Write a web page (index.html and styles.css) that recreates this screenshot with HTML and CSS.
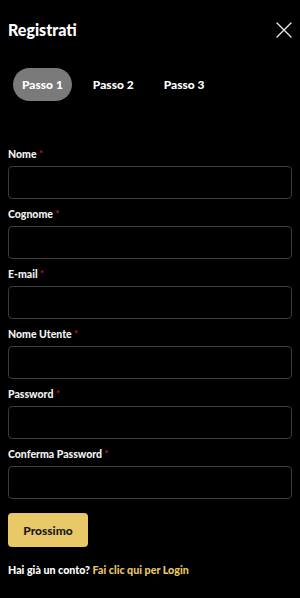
FILE: index.html
```html
<!DOCTYPE html>
<html lang="it">
<head>
<meta charset="utf-8">
<link rel="stylesheet" href="styles.css">
<title>Registrati</title>
</head>
<body>
<div class="panel">
  <header class="header">
    <h1 class="title">Registrati</h1>
    <button class="close" aria-label="Chiudi">
      <svg width="16" height="16" viewBox="0 0 16 16"><path d="M1 1 L15 15 M15 1 L1 15" stroke="#e6e6e6" stroke-width="1.4" fill="none" stroke-linecap="round"/></svg>
    </button>
  </header>
  <nav class="steps">
    <span class="step active">Passo 1</span>
    <span class="step">Passo 2</span>
    <span class="step">Passo 3</span>
  </nav>
  <form class="form">
    <div class="field"><label class="label">Nome <span class="req">*</span></label><input class="input" type="text"></div>
    <div class="field"><label class="label">Cognome <span class="req">*</span></label><input class="input" type="text"></div>
    <div class="field"><label class="label">E-mail <span class="req">*</span></label><input class="input" type="text"></div>
    <div class="field"><label class="label">Nome Utente <span class="req">*</span></label><input class="input" type="text"></div>
    <div class="field"><label class="label">Password <span class="req">*</span></label><input class="input" type="password"></div>
    <div class="field"><label class="label">Conferma Password <span class="req">*</span></label><input class="input" type="password"></div>
    <button class="next" type="button">Prossimo</button>
    <p class="login">Hai già un conto? <a class="link" href="#">Fai clic qui per Login</a></p>
  </form>
</div>
</body>
</html>
```
FILE: styles.css
```css
html, body {
  margin: 0;
  padding: 0;
  background: #000;
}
body {
  font-family: Lato, "Open Sans", sans-serif;
  color: #fff;
  width: 300px;
  height: 598px;
  overflow: hidden;
}
.panel {
  padding: 0 8px;
}
.header {
  height: 60px;
  display: flex;
  align-items: center;
  justify-content: space-between;
}
.title {
  margin: 0;
  font-size: 16px;
  line-height: 20px;
  font-weight: 900;
  color: #fff;
}
.close {
  background: none;
  border: 0;
  padding: 0;
  width: 16px;
  height: 16px;
  display: flex;
}
.steps {
  margin-top: 8px;
  padding-left: 5px;
  display: flex;
  gap: 12px;
}
.step {
  height: 33px;
  padding: 0 9px;
  display: flex;
  align-items: center;
  border-radius: 17px;
  font-size: 12px;
  font-weight: 900;
  color: #fff;
}
.step.active {
  background: #7a7a7a;
}
.form {
  margin: 46px 0 0;
  display: flex;
  flex-direction: column;
  gap: 8px;
}
.field {
  display: flex;
  flex-direction: column;
  gap: 5px;
}
.label {
  font-size: 10.5px;
  line-height: 14px;
  font-weight: 900;
  color: #f2f2f2;
}
.req {
  color: #c8102e;
  font-size: 9px;
  vertical-align: top;
}
.input {
  box-sizing: border-box;
  height: 33px;
  width: 100%;
  margin: 0;
  background: #000;
  border: 1px solid #3c3c3c;
  border-radius: 4px;
  color: #fff;
}
.next {
  margin-top: 6px;
  width: 80px;
  height: 34px;
  background: #e9c867;
  border: 0;
  border-radius: 4px;
  font-family: Lato, "Open Sans", sans-serif;
  font-size: 12px;
  font-weight: 900;
  color: #1a1a1a;
}
.login {
  margin: 8px 0 0;
  font-size: 10.7px;
  line-height: 14px;
  font-weight: 900;
  color: #fff;
}
.link {
  color: #e9c867;
  text-decoration: none;
}
```
